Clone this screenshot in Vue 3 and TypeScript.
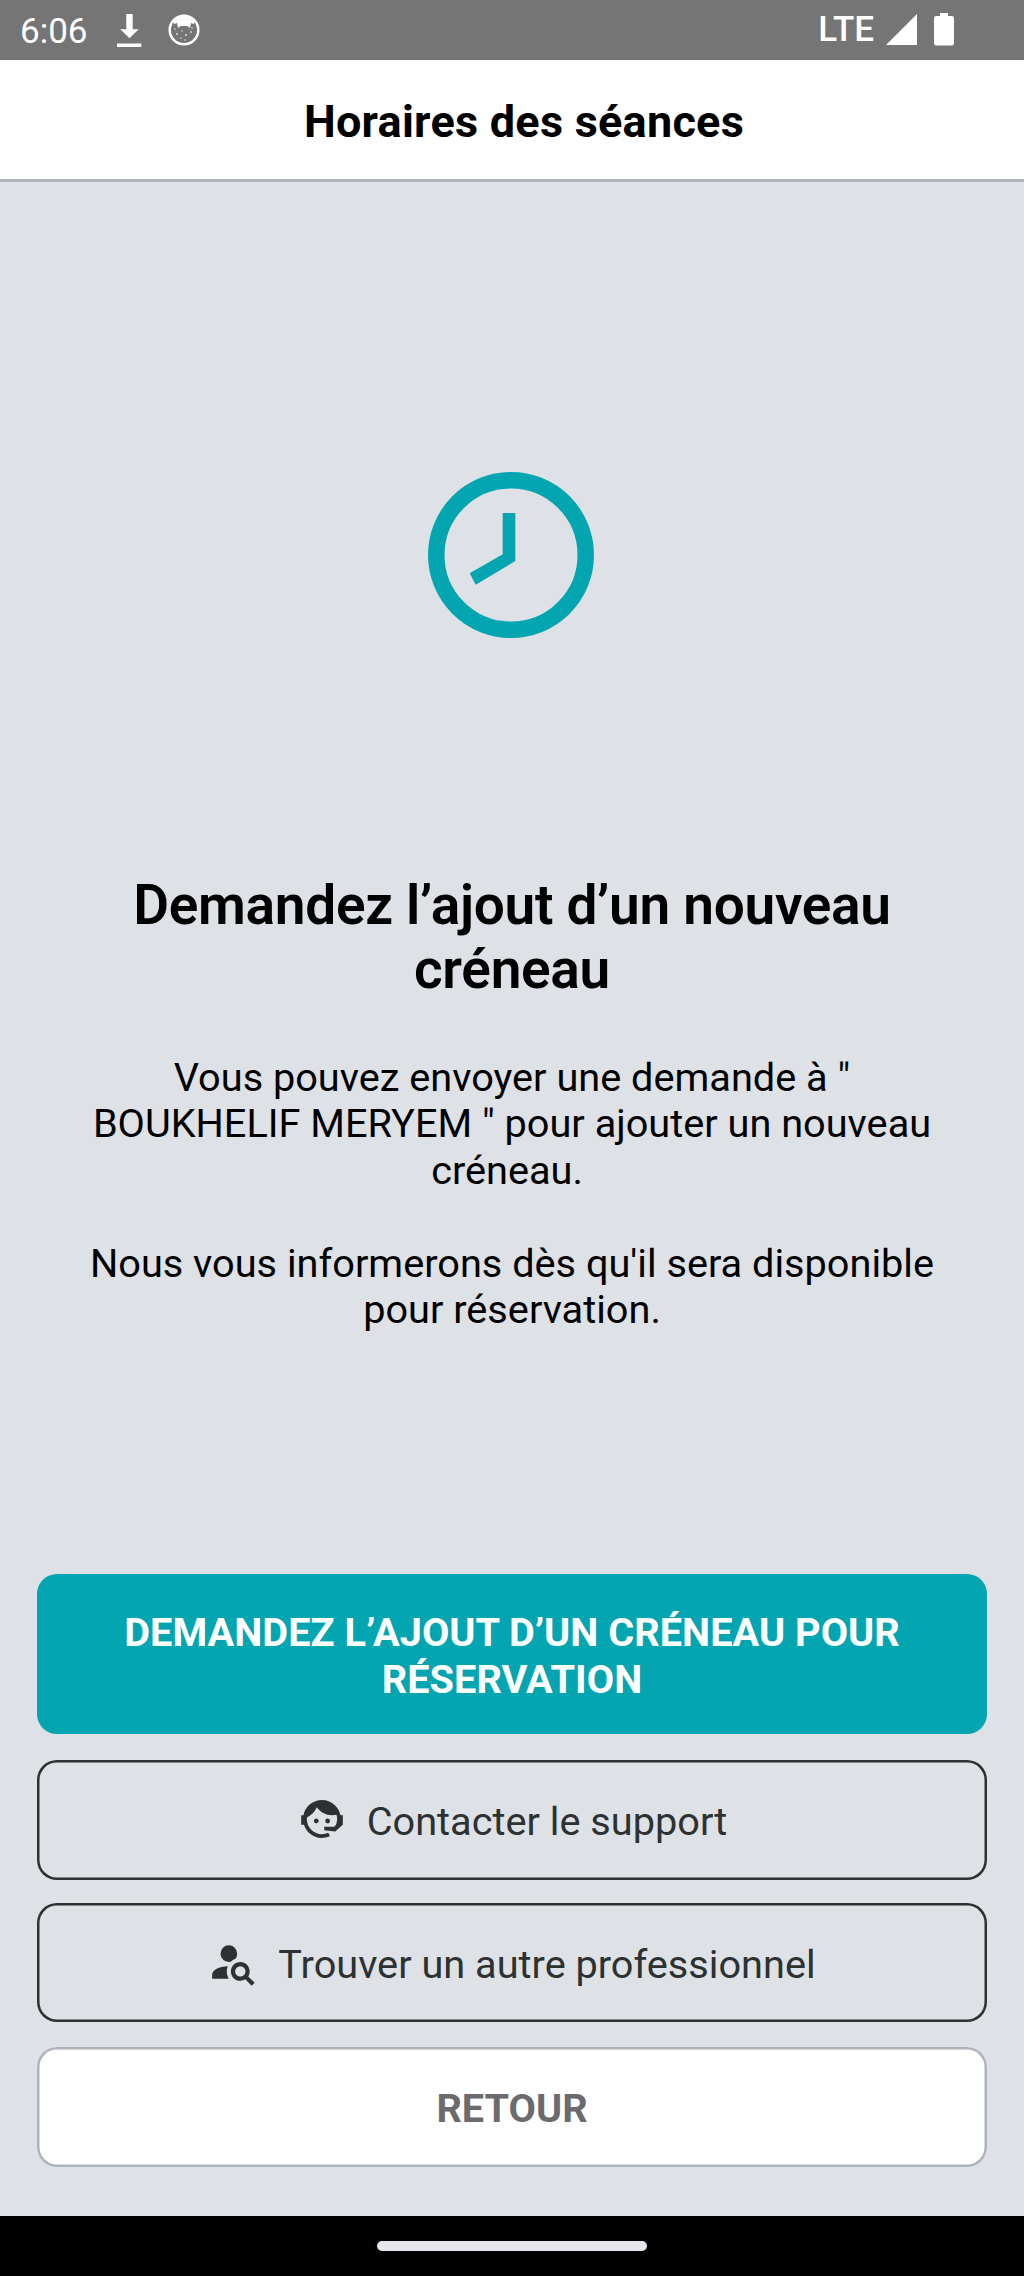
<script setup lang="ts">
interface Action { label: string; kind: 'support' | 'search'; path: string }

const paragraphs: string[][] = [
  ['Vous pouvez envoyer une demande à "', 'BOUKHELIF MERYEM " pour ajouter un nouveau', 'créneau.\u00a0'],
  ["Nous vous informerons dès qu'il sera disponible", 'pour réservation.'],
]
const actions: Action[] = [
  {
    label: 'Contacter le support',
    kind: 'support',
    path: 'M18.72,14.76C19.07,13.91 19.26,13 19.26,12C19.26,11.28 19.15,10.59 18.96,9.95C18.31,10.1 17.63,10.18 16.92,10.18C13.86,10.18 11.15,8.67 9.5,6.34C8.61,8.5 6.91,10.26 4.77,11.22C4.73,11.47 4.73,11.74 4.73,12A7.27,7.27 0 0,0 12,19.27C13.05,19.27 14.06,19.04 14.97,18.63C15.54,19.72 15.8,20.26 15.78,20.26C14.14,20.81 12.87,21.08 12,21.08C9.58,21.08 7.27,20.13 5.57,18.42C4.53,17.38 3.76,16.11 3.33,14.73H2V10.18H3.09C3.93,6.04 7.6,2.92 12,2.92C14.4,2.92 16.71,3.87 18.42,5.58C19.69,6.84 20.54,8.45 20.89,10.18H22V14.73H21.94L18.38,18L13.08,17.4V15.73H17.91L18.72,14.76M9.27,11.77C9.57,11.77 9.86,11.89 10.07,12.11C10.28,12.32 10.4,12.61 10.4,12.91C10.4,13.21 10.28,13.5 10.07,13.71C9.86,13.92 9.57,14.04 9.27,14.04C8.64,14.04 8.13,13.54 8.13,12.91C8.13,12.28 8.64,11.77 9.27,11.77M14.72,11.77C15.35,11.77 15.85,12.28 15.85,12.91C15.85,13.54 15.35,14.04 14.72,14.04C14.09,14.04 13.58,13.54 13.58,12.91A1.14,1.14 0 0,1 14.72,11.77Z',
  },
  {
    label: 'Trouver un autre professionnel',
    kind: 'search',
    path: 'M15.5,12C18,12 20,14 20,16.5C20,17.38 19.75,18.21 19.31,18.9L22.39,22L21,23.39L17.88,20.32C17.19,20.75 16.37,21 15.5,21C13,21 11,19 11,16.5C11,14 13,12 15.5,12M15.5,14A2.5,2.5 0 0,0 13,16.5A2.5,2.5 0 0,0 15.5,19A2.5,2.5 0 0,0 18,16.5A2.5,2.5 0 0,0 15.5,14M10,4A4,4 0 0,1 14,8C14,8.91 13.69,9.75 13.18,10.43C12.32,10.75 11.55,11.26 10.91,11.9L10,12A4,4 0 0,1 6,8A4,4 0 0,1 10,4M2,20V18C2,15.88 5.31,14.14 9.5,14C9.18,14.78 9,15.62 9,16.5C9,17.79 9.38,19 10,20H2Z',
  },
]
</script>

<template>
  <div class="screen">
    <div class="status">
      <span class="time">6:06</span>
      <svg class="download" width="26" height="36" viewBox="0 0 26 36"><path d="M9.300 0h6.400v15.300h6L12.500 24.300 3.300 15.300h6zM0 29.600h24.300v3.300H0z" fill="#fff" /></svg>
      <svg class="face" width="32" height="32" viewBox="0 0 32 32">
        <circle cx="16" cy="16" r="14.300" fill="none" stroke="#fff" stroke-width="2.500" />
        <path d="M5 8Q16-4 27 8l-1.500 2-2.500-1-.5 3-1 2-2-2h-7l-2 2-1-2-.5-3-2.500 1z" fill="#fff" />
        <g fill="#fff" opacity=".75"><circle cx="9" cy="20" r="1" /><circle cx="14" cy="17" r=".8" /><circle cx="18" cy="21" r="1" /><circle cx="23" cy="18" r=".9" /><circle cx="13" cy="24" r=".8" /><circle cx="17" cy="26" r=".8" /><circle cx="24" cy="14" r=".8" /><circle cx="7" cy="15" r=".8" /></g>
      </svg>
      <span class="lte">LTE</span>
      <svg class="signal" width="31" height="31" viewBox="0 0 31 31"><path d="M31 0v31H0z" fill="#fff" /></svg>
      <svg class="battery" width="20" height="33" viewBox="0 0 20 33"><path d="M6 0h8v3h4q2 0 2 2v25.500q0 2-2 2H2q-2 0-2-2V5q0-2 2-2h4z" fill="#fff" /></svg>
    </div>
    <header class="header"><h1>Horaires des séances</h1></header>
    <main class="main">
      <svg class="clock" width="166" height="166" viewBox="0 0 166 166">
        <circle cx="83" cy="83" r="74.750" fill="none" stroke="#03a6b0" stroke-width="16.500" />
        <path d="M74.700 41h12.600v48L47.700 112.700 41.700 101.300 74.700 82.300z" fill="#03a6b0" />
      </svg>
      <h2>Demandez l’ajout d’un nouveau<br>créneau</h2>
      <div class="copy">
        <p v-for="(lines, i) in paragraphs" :key="i"><span v-for="line in lines" :key="line">{{ line }}</span></p>
      </div>
      <div class="buttons">
        <button class="btn primary"><span>DEMANDEZ L’AJOUT D’UN CRÉNEAU POUR</span><span>RÉSERVATION</span></button>
        <button v-for="a in actions" :key="a.label" class="btn outline" :class="a.kind">
          <svg class="icon" width="50" height="50" viewBox="0 0 24 24"><path :d="a.path" fill="#2c3131" /></svg>
          <span>{{ a.label }}</span>
        </button>
        <button class="btn back">RETOUR</button>
      </div>
    </main>
    <nav class="nav"><div class="pill"></div></nav>
  </div>
</template>

<style>
body { margin: 0; }
</style>

<style scoped>
* { box-sizing: border-box; }
.screen { width: 1024px; height: 2276px; display: flex; flex-direction: column; background: #dee1e6; font-family: Roboto, "Liberation Sans", sans-serif; color: #000; }
.status { height: 60px; background: #757575; display: flex; align-items: flex-start; color: #fff; padding: 0 70px 0 20px; flex-shrink: 0; }
.time { font-size: 35px; line-height: 40px; margin-top: 12px; width: 97px; }
.download { margin-top: 14px; }
.face { margin: 14px 0 0 25px; }
.lte { margin: 10px 12px 0 auto; font-size: 35px; line-height: 40px; font-weight: 500; }
.signal { margin: 14px 17px 0 0; }
.battery { margin-top: 13px; }
.header { height: 122px; background: #fff; border-bottom: 3px solid #aeb3b9; display: flex; justify-content: center; flex-shrink: 0; padding: 35px 0 0 24px; }
h1 { margin: 0; font-size: 45px; line-height: 54px; font-weight: 700; letter-spacing: .25px; white-space: nowrap; }
.main { flex: 1; display: flex; flex-direction: column; align-items: center; padding-top: 290px; }
.clock { flex-shrink: 0; margin-right: 2px; }
h2 { margin: 234.500px 0 0; font-size: 55px; line-height: 64.500px; font-weight: 600; letter-spacing: -.3px; text-align: center; white-space: nowrap; }
.copy { margin-top: 53px; font-size: 39.700px; line-height: 46.500px; text-align: center; }
p { margin: 0 0 46.500px; }
p span { display: block; white-space: nowrap; }
.buttons { width: 950px; margin-top: auto; margin-bottom: 49px; display: flex; flex-direction: column; }
.btn { font: inherit; font-size: 39.700px; line-height: 46.500px; border: 0; border-radius: 20px; height: 120px; width: 100%; padding: 5px 0 0; margin: 0; display: flex; align-items: center; justify-content: center; white-space: nowrap; }
.primary { height: 160px; background: #03a6b0; color: #fff; font-weight: 700; letter-spacing: .05px; flex-direction: column; margin-bottom: 26px; }
.outline { background: transparent; box-shadow: inset 0 0 0 2.500px #2c3131; color: #2c3131; }
.outline.support { margin-bottom: 23px; }
.outline.search { height: 119px; margin-bottom: 25px; }
.icon { margin: -7px 20px 0 0; flex-shrink: 0; }
.back { background: #fff; box-shadow: inset 0 0 0 2.500px #aeb3b9; color: #6b6b6e; font-weight: 700; }
.nav { height: 60px; background: #000; display: flex; justify-content: center; align-items: center; flex-shrink: 0; }
.pill { width: 270px; height: 10px; border-radius: 5px; background: #e6e7ed; }
</style>
